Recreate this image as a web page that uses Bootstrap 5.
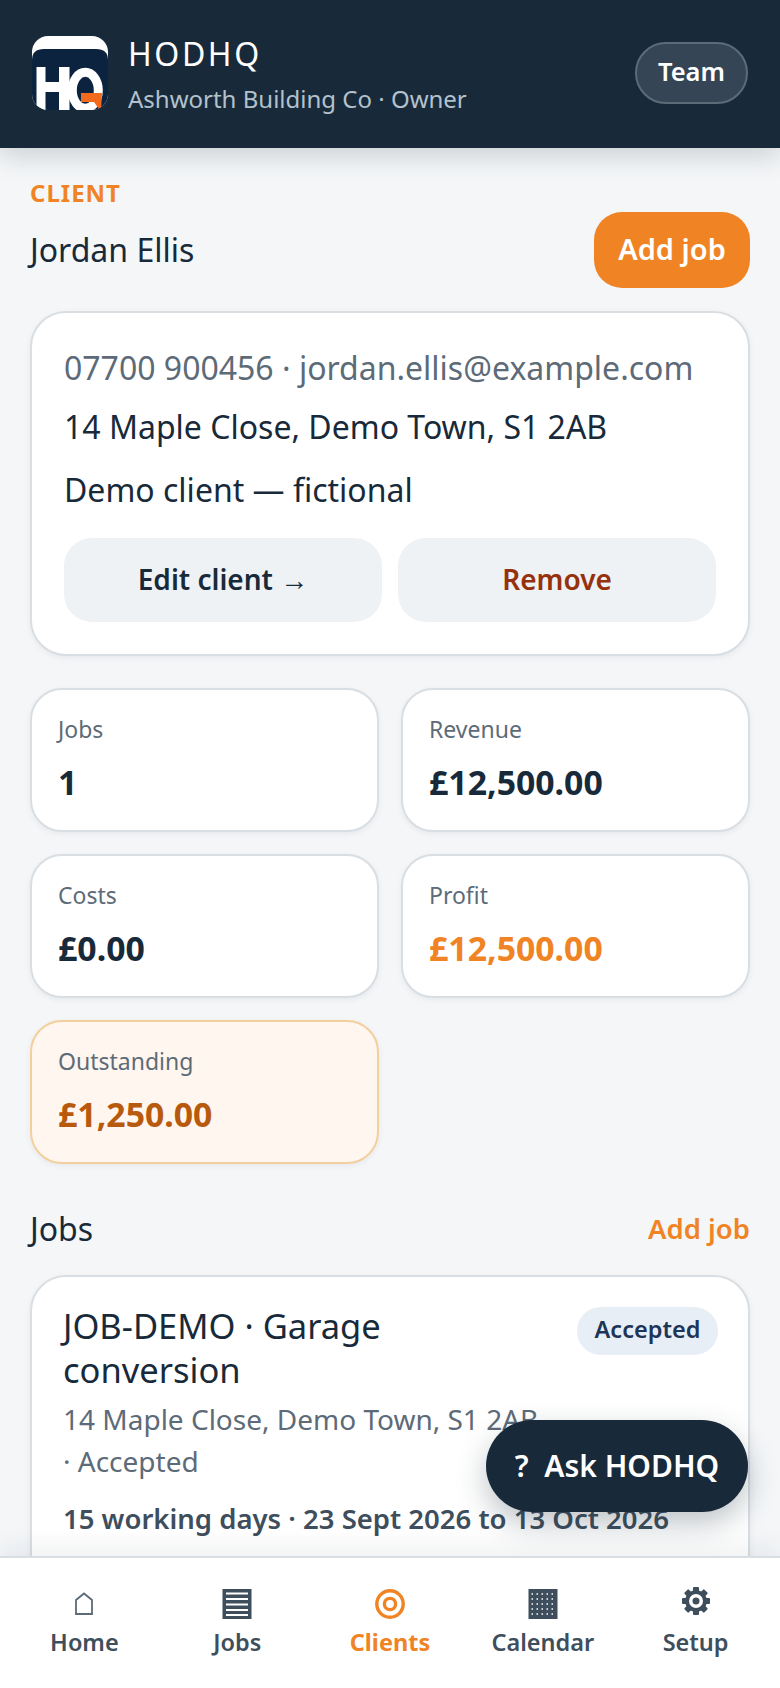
<!DOCTYPE html>
<html lang="en">
<head>
<meta charset="UTF-8">
<meta name="viewport" content="width=device-width, initial-scale=1.0">
<title>HODHQ - Client</title>
<link href="https://cdn.jsdelivr.net/npm/bootstrap@5.3.0/dist/css/bootstrap.min.css" rel="stylesheet">
<style>
    html, body { height: 100%; }
    body {
        background-color: #f4f6f8;
        color: #182a3a;
        font-family: "Noto Sans", sans-serif;
        font-size: 30px;
        overflow: hidden;
    }
    .app-shell { height: 1688px; width: 780px; }
    .top-bar {
        flex: none;
        height: 148px;
        background-color: #182a3a;
        padding: 0 32px;
        box-shadow: 0 8px 24px rgba(24, 42, 58, .18);
        z-index: 2;
    }
    .logo-box { width: 76px; height: 76px; margin-right: 20px; flex: none; }
    .brand-name { font-size: 32px; line-height: 44px; color: #fff; letter-spacing: 2.6px; }
    .brand-sub { font-size: 24px; line-height: 36px; color: #b3c1cd; margin-top: 5px; }
    .team-btn {
        height: 62px;
        width: 113px;
        padding: 0 0 4px;
        margin-top: -2px;
        border-radius: 31px;
        background-color: #354555;
        border: 2px solid #5d6b78;
        color: #fff;
        font-size: 25.5px;
        font-weight: 600;
    }
    .page-body { flex: 1 1 0; padding: 30px 30px 0; overflow: hidden; min-height: 0; }
    .eyebrow { font-size: 24px; line-height: 30px; font-weight: 700; color: #f08425; letter-spacing: 1px; margin-bottom: 4px; }
    .client-name { font-size: 32px; line-height: 44px; font-weight: 400; margin: 0; }
    .add-btn {
        height: 76px;
        width: 156px;
        padding: 0 0 3px;
        border: 0;
        border-radius: 28px;
        background-color: #f08425;
        color: #fff;
        font-size: 29px;
        font-weight: 600;
    }
    .panel {
        background-color: #fff;
        border: 2px solid #d9dee3;
        border-radius: 36px;
        box-shadow: 0 2px 6px rgba(24, 42, 58, .06);
    }
    .client-panel { margin-top: 23px; padding: 33px 32px 0; height: 345px; }
    .contact-line { font-size: 32px; line-height: 44px; color: #5d6b78; }
    .detail-line { font-size: 32px; line-height: 44px; color: #182a3a; margin-top: 15px; }
    .detail-line.note { margin-top: 19px; }
    .action-row { margin-top: 26px; }
    .soft-btn {
        height: 84px;
        padding: 0 0 2px;
        border: 0;
        border-radius: 28px;
        background-color: #eef2f5;
        font-size: 28px;
        font-weight: 600;
        color: #182a3a;
    }
    .soft-btn.danger { color: #95310d; }
    .stats-grid {
        display: grid;
        grid-template-columns: 1fr 1fr;
        gap: 22px;
        margin-top: 32px;
    }
    .stat-panel { height: 144px; padding: 22px 26px; border-radius: 32px; }
    .stat-label { font-size: 23px; line-height: 34px; color: #5d6b78; }
    .stat-value { font-size: 33.8px; line-height: 46px; font-weight: 700; margin-top: 13px; }
    .stat-value.orange { color: #f08425; }
    .stat-panel.due { background-color: #fff6ef; border-color: #f3cf9e; }
    .stat-value.due-text { color: #b85a0e; }
    .jobs-head { margin-top: 43px; height: 44px; }
    .jobs-title { font-size: 32px; line-height: 44px; font-weight: 400; margin: 0; }
    .jobs-link { font-size: 27.5px; font-weight: 600; color: #f08425; text-decoration: none; }
    .job-panel { margin-top: 24px; padding: 30px 30px 0 31px; height: 400px; }
    .job-title { font-size: 34.5px; line-height: 44px; max-width: 420px; margin-top: -3px; }
    .status-pill {
        flex: none;
        height: 48px;
        width: 141px;
        padding-bottom: 2px;
        border-radius: 24px;
        background-color: #e8eef6;
        color: #1d3557;
        font-size: 23.5px;
        font-weight: 600;
    }
    .job-addr { font-size: 28px; line-height: 42px; color: #5d6b78; margin-top: 6px; max-width: 480px; }
    .job-dates { font-size: 27.5px; line-height: 42px; font-weight: 600; color: #3e4e5c; margin-top: 16px; white-space: nowrap; }
    .ask-fab {
        right: 32px;
        bottom: 176px;
        width: 262px;
        height: 92px;
        padding: 0 0 2px;
        border: 0;
        border-radius: 46px;
        background-color: #182a3a;
        color: #fff;
        font-size: 30px;
        font-weight: 600;
        box-shadow: 0 12px 30px rgba(24, 42, 58, .28);
        z-index: 3;
    }
    .tab-bar {
        height: 132px;
        flex: none;
        background-color: #fff;
        border-top: 2px solid #d9dee3;
        box-shadow: 0 -8px 24px rgba(24, 42, 58, .07);
        padding: 0 8px;
        z-index: 2;
    }
    .tab-item { flex: 1 1 0; text-decoration: none; color: #3e4e5c; font-size: 23.5px; font-weight: 600; line-height: 32px; padding-top: 28px; }
    .tab-item.active { color: #f08425; font-weight: 700; }
    .tab-icon { width: 36px; height: 36px; margin-bottom: 4px; flex: none; }
</style>
</head>
<body>
<div class="app-shell d-flex flex-column position-relative">
    <header class="top-bar d-flex align-items-center position-relative">
        <svg class="logo-box" viewBox="0 0 76 76">
            <defs><clipPath id="logoClip"><rect width="76" height="74" rx="16"/></clipPath></defs>
            <g clip-path="url(#logoClip)">
                <rect width="76" height="74" fill="#fff"/>
                <path d="M0 24 Q0 13 12 13 H64 Q76 13 76 24 V74 H0 Z" fill="#0c2340"/>
                <path d="M4.5 31 H13.5 V46 H27 V31 H37.5 V76 H27 V56 H13.5 V76 H4.5 Z" fill="#fff"/>
                <ellipse cx="53.3" cy="54.3" rx="13" ry="18" fill="none" stroke="#fff" stroke-width="9"/>
                <path d="M49 57 H70 L69 76 L62 66 H49 Z" fill="#f26a1b"/>
            </g>
        </svg>
        <div class="flex-grow-1">
            <div class="brand-name">HODHQ</div>
            <div class="brand-sub">Ashworth Building Co · Owner</div>
        </div>
        <button class="btn team-btn">Team</button>
    </header>

    <main class="page-body">
        <div class="eyebrow">CLIENT</div>
        <div class="d-flex justify-content-between align-items-center">
            <h1 class="client-name">Jordan Ellis</h1>
            <button class="btn add-btn">Add job</button>
        </div>

        <section class="panel client-panel">
            <div class="contact-line">07700 900456 · jordan.ellis@example.com</div>
            <div class="detail-line">14 Maple Close, Demo Town, S1 2AB</div>
            <div class="detail-line note">Demo client — fictional</div>
            <div class="d-flex gap-3 action-row">
                <button class="btn soft-btn flex-fill w-50">Edit client →</button>
                <button class="btn soft-btn danger flex-fill w-50">Remove</button>
            </div>
        </section>

        <section class="stats-grid">
            <div class="panel stat-panel"><div class="stat-label">Jobs</div><div class="stat-value">1</div></div>
            <div class="panel stat-panel"><div class="stat-label">Revenue</div><div class="stat-value">£12,500.00</div></div>
            <div class="panel stat-panel"><div class="stat-label">Costs</div><div class="stat-value">£0.00</div></div>
            <div class="panel stat-panel"><div class="stat-label">Profit</div><div class="stat-value orange">£12,500.00</div></div>
            <div class="panel stat-panel due"><div class="stat-label">Outstanding</div><div class="stat-value due-text">£1,250.00</div></div>
        </section>

        <div class="jobs-head d-flex justify-content-between align-items-center">
            <h2 class="jobs-title">Jobs</h2>
            <a class="jobs-link" href="#">Add job</a>
        </div>

        <section class="panel job-panel">
            <div class="d-flex justify-content-between align-items-start">
                <div class="job-title">JOB-DEMO · Garage conversion</div>
                <span class="status-pill d-flex align-items-center justify-content-center">Accepted</span>
            </div>
            <div class="job-addr">14 Maple Close, Demo Town, S1 2AB · Accepted</div>
            <div class="job-dates">15 working days · 23 Sept 2026 to 13 Oct 2026</div>
        </section>
    </main>

    <button class="btn ask-fab position-absolute">?&nbsp; Ask HODHQ</button>

    <nav class="tab-bar d-flex position-relative">
        <a class="tab-item d-flex flex-column align-items-center" href="#">
            <svg class="tab-icon" viewBox="0 0 36 36"><path d="M10 28 V14 L18 7.5 L26 14 V28 Z" fill="none" stroke="#5d6b78" stroke-width="1.8"/></svg>
            Home
        </a>
        <a class="tab-item d-flex flex-column align-items-center" href="#">
            <svg class="tab-icon" viewBox="0 0 36 36">
                <rect x="3.5" y="3" width="29" height="30" fill="#3e4e5c"/>
                <path d="M7 7.5 H29 M7 13 H29 M7 18.5 H29 M7 24 H29 M7 29 H29" stroke="#fff" stroke-width="1.8"/>
            </svg>
            Jobs
        </a>
        <a class="tab-item active d-flex flex-column align-items-center" href="#">
            <svg class="tab-icon" viewBox="0 0 36 36">
                <circle cx="18" cy="18" r="13.2" fill="none" stroke="#f08425" stroke-width="3.4"/>
                <circle cx="18" cy="18" r="5.6" fill="none" stroke="#f08425" stroke-width="3.4"/>
            </svg>
            Clients
        </a>
        <a class="tab-item d-flex flex-column align-items-center" href="#">
            <svg class="tab-icon" viewBox="0 0 36 36">
                <rect x="3.5" y="3" width="29" height="30" fill="#3e4e5c"/>
                <path d="M6.5 8 H30 M6.5 13 H30 M6.5 18 H30 M6.5 23 H30 M6.5 28 H30" stroke="#fff" stroke-width="1.5" stroke-dasharray="1.5 3.5"/>
            </svg>
            Calendar
        </a>
        <a class="tab-item d-flex flex-column align-items-center" href="#">
            <svg class="tab-icon" viewBox="0 0 36 36">
                <g fill="#3e4e5c" transform="translate(18 15)">
                    <circle r="10.8"/>
                    <rect x="-3" y="-14" width="6" height="28" rx="1"/>
                    <rect x="-3" y="-14" width="6" height="28" rx="1" transform="rotate(45)"/>
                    <rect x="-3" y="-14" width="6" height="28" rx="1" transform="rotate(90)"/>
                    <rect x="-3" y="-14" width="6" height="28" rx="1" transform="rotate(135)"/>
                    <circle r="7" fill="#fff"/>
                    <circle r="3.5"/>
                </g>
            </svg>
            Setup
        </a>
    </nav>
</div>
<script src="https://cdn.jsdelivr.net/npm/bootstrap@5.3.0/dist/js/bootstrap.bundle.min.js"></script>
</body>
</html>
